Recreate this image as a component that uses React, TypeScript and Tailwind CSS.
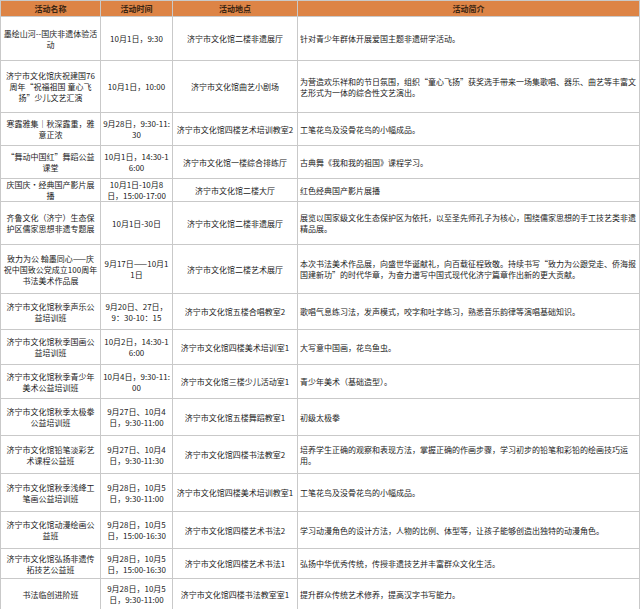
const rows: [string, string, string, string, number][] = [
  ["墨绘山河--国庆非遗体验活动", "10月1日，9:30", "济宁市文化馆二楼非遗展厅", "针对青少年群体开展爱国主题非遗研学活动。", 44],
  ["济宁市文化馆庆祝建国76周年“祝福祖国 童心飞扬”少儿文艺汇演", "10月1日，10:00", "济宁市文化馆曲艺小剧场", "为营造欢乐祥和的节日氛围，组织“童心飞扬”获奖选手带来一场集歌唱、器乐、曲艺等丰富文艺形式为一体的综合性文艺演出。", 52],
  ["寒露雅集｜秋深露重，雅意正浓", "9月28日，9:30-11:30", "济宁市文化馆四楼艺术培训教室2", "工笔花鸟及没骨花鸟的小幅成品。", 33],
  ["“舞动中国红”舞蹈公益课堂", "10月1日，14:30-16:00", "济宁市文化馆一楼综合排练厅", "古典舞《我和我的祖国》课程学习。", 33],
  ["庆国庆·经典国产影片展播", "10月1日-10月8日，15:00-17:00", "济宁市文化馆二楼大厅", "红色经典国产影片展播", 23],
  ["齐鲁文化（济宁）生态保护区儒家思想非遗专题展", "10月1日-30日", "济宁市文化馆二楼非遗展厅", "展览以国家级文化生态保护区为依托，以至圣先师孔子为核心，围绕儒家思想的手工技艺类非遗精品展。", 43],
  ["致力为公 翰墨同心——庆祝中国致公党成立100周年书法美术作品展", "9月17日——10月11日", "济宁市文化馆二楼艺术展厅", "本次书法美术作品展，向盛世华诞献礼，向百载征程致敬。持续书写“致力为公跟党走、侨海报国建新功”的时代华章，为奋力谱写中国式现代化济宁篇章作出新的更大贡献。", 49],
  ["济宁市文化馆秋季声乐公益培训班", "9月20日、27日，9：30-10：15", "济宁市文化馆五楼合唱教室2", "歌唱气息练习法，发声模式，咬字和吐字练习，熟悉音乐韵律等演唱基础知识。", 36],
  ["济宁市文化馆秋季国画公益培训班", "10月2日，14:30-16:00", "济宁市文化馆四楼美术培训室1", "大写意中国画，花鸟鱼虫。", 35],
  ["济宁市文化馆秋季青少年美术公益培训班", "10月4日，9:30-11:00", "济宁市文化馆三楼少儿活动室1", "青少年美术（基础造型）。", 34],
  ["济宁市文化馆秋季太极拳公益培训班", "9月27日、10月4日，9:30-11:00", "济宁市文化馆五楼舞蹈教室1", "初级太极拳", 37],
  ["济宁市文化馆铅笔淡彩艺术课程公益班", "9月27日、10月4日，9:30-11:30", "济宁市文化馆四楼书法教室2", "培养学生正确的观察和表现方法，掌握正确的作画步骤，学习初步的铅笔和彩铅的绘画技巧运用。", 38],
  ["济宁市文化馆秋季浅绛工笔画公益培训班", "9月28日，10月5日，9:30-11:00", "济宁市文化馆四楼美术培训教室1", "工笔花鸟及没骨花鸟的小幅成品。", 38],
  ["济宁市文化馆动漫绘画公益班", "9月28日，10月5日，15:00-16:30", "济宁市文化馆四楼艺术书法2", "学习动漫角色的设计方法，人物的比例、体型等，让孩子能够创造出独特的动漫角色。", 37],
  ["济宁市文化馆弘扬非遗传拓技艺公益班", "9月28日，10月5日，15:00-16:30", "济宁市文化馆四楼艺术书法1", "弘扬中华优秀传统，传授非遗技艺并丰富群众文化生活。", 30],
  ["书法临创进阶班", "9月28日，10月5日，9:30-11:00", "济宁市文化馆四楼书法教室室1", "提升群众传统艺术修养，提高汉字书写能力。", 31],
];

export default function App() {
  const font = { fontFamily: '"Noto Sans CJK SC", "Liberation Sans", sans-serif' };
  return (
    <div className="w-[640px] h-[609px] overflow-hidden bg-white text-[#222]" style={font}>
      <table className="w-[640px] border-collapse table-fixed text-[8px] leading-[11px]">
        <colgroup>
          <col className="w-[100px]" />
          <col className="w-[72px]" />
          <col className="w-[125px]" />
          <col />
        </colgroup>
        <thead>
          <tr className="h-[16px] bg-[#dd8446] font-bold text-[#3a2412]">
            {["活动名称", "活动时间", "活动地点", "活动简介"].map((h) => (
              <th key={h} className="border border-[#c9c9c9] text-center p-0">{h}</th>
            ))}
          </tr>
        </thead>
        <tbody>
          {rows.map(([name, time, place, desc, h], i) => (
            <tr key={i} style={{ height: h }}>
              <td className="border border-[#c9c9c9] text-center px-[2px] py-0">{name}</td>
              <td className="border border-[#c9c9c9] text-center px-[2px] py-0 break-all">{time}</td>
              <td className="border border-[#c9c9c9] text-center px-[1px] py-0 whitespace-nowrap">{place}</td>
              <td className="border border-[#c9c9c9] text-left px-[2px] py-0">{desc}</td>
            </tr>
          ))}
        </tbody>
      </table>
    </div>
  );
}
